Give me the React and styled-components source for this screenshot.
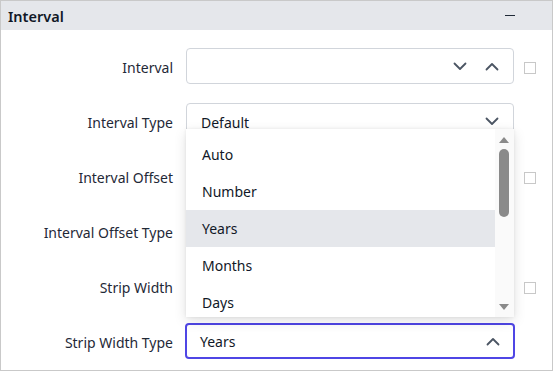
import React from "react";
import styled, { createGlobalStyle } from "styled-components";

const Global = createGlobalStyle`
  html, body { margin: 0; padding: 0; background: #fff; }
  body { font-family: "Segoe UI", "Noto Sans", "Open Sans", sans-serif; }
`;

const Panel = styled.div`
  width: 553px;
  height: 371px;
  box-sizing: border-box;
  border: 1px solid #c9c9c9;
  background: #fff;
  display: flex;
  flex-direction: column;
`;

const Header = styled.div`
  height: 29px;
  background: #e5e7eb;
  display: flex;
  align-items: center;
  justify-content: space-between;
  padding: 0 37px 0 7px;
  font-size: 14.5px;
  font-weight: 600;
  color: #111827;
`;

const Minus = styled.span`
  width: 10px;
  height: 1.5px;
  background: #1f2937;
`;

const Body = styled.div`
  display: flex;
  flex-direction: column;
  gap: 19px;
  padding-top: 18px;
`;

const Row = styled.div`
  display: grid;
  grid-template-columns: 185px 328px 12px;
  height: 36px;
  align-items: center;
  position: relative;
  z-index: ${(p) => (p.$raised ? 2 : 1)};
`;

const Label = styled.div`
  text-align: right;
  padding-right: 13px;
  font-size: 14px;
  color: #1f2937;
  padding-top: 3px;
`;

const Field = styled.div`
  position: relative;
  height: 36px;
  box-sizing: border-box;
  border: ${(p) => (p.$focused ? "2px solid #4f46e5" : "1px solid #d1d5db")};
  border-radius: 4px;
  display: flex;
  align-items: center;
  padding: 0 ${(p) => (p.$focused ? "13px" : "14px")};
  font-size: 14px;
  color: #111827;
  background: #fff;
  margin-left: ${(p) => (p.$focused ? "-1px" : "0")};
  margin-right: ${(p) => (p.$focused ? "-1px" : "0")};
`;

const Value = styled.span`
  flex: 1;
  padding-top: ${(p) => (p.$top ? "2px" : "0")};
`;

const Icons = styled.div`
  display: flex;
  gap: 18px;
  align-items: center;
`;

const Check = styled.div`
  width: 12px;
  height: 12px;
  box-sizing: border-box;
  border: 1px solid #c8c8c8;
  margin-left: 10px;
  margin-top: 4px;
  visibility: ${(p) => (p.$hidden ? "hidden" : "visible")};
`;

const Popup = styled.div`
  position: absolute;
  left: -1px;
  top: 25px;
  width: 328px;
  height: 188px;
  background: #fff;
  box-shadow: 0 4px 12px rgba(0, 0, 0, 0.12), 0 0 3px rgba(0, 0, 0, 0.08);
  display: flex;
  overflow: hidden;
  z-index: 5;
`;

const List = styled.ul`
  list-style: none;
  margin: 0;
  padding: 7px 0 0;
  flex: 1;
`;

const Item = styled.li`
  height: 37px;
  line-height: 37px;
  padding-left: 16px;
  font-size: 14px;
  color: #111827;
  background: ${(p) => (p.$active ? "#e5e7eb" : "transparent")};
`;

const ScrollBar = styled.div`
  width: 19px;
  display: flex;
  flex-direction: column;
  align-items: center;
  padding: 8px 2px 7px 0;
  box-sizing: border-box;
  background: #fafafa;
`;

const Thumb = styled.div`
  width: 10px;
  height: 68px;
  border-radius: 5px;
  background: #8a8a8a;
  margin-top: 6px;
`;

const Spacer = styled.div`
  flex: 1;
`;

const Arrow = styled.div`
  width: 0;
  height: 0;
  border-left: 5px solid transparent;
  border-right: 5px solid transparent;
  ${(p) =>
    p.$down
      ? "border-top: 6px solid #8a8a8a;"
      : "border-bottom: 6px solid #8a8a8a;"}
`;

const Chevron = ({ up }) => (
  <svg width="14" height="9" viewBox="0 0 14 9" fill="none">
    <path
      d={up ? "M1.5 7.5 L7 2 L12.5 7.5" : "M1.5 1.5 L7 7 L12.5 1.5"}
      stroke="#4b5563"
      strokeWidth="1.8"
      strokeLinecap="round"
      strokeLinejoin="round"
    />
  </svg>
);

const items = ["Auto", "Number", "Years", "Months", "Days"];

export default function App() {
  return (
    <>
      <Global />
      <Panel>
        <Header>
          <span>Interval</span>
          <Minus />
        </Header>
        <Body>
          <Row>
            <Label>Interval</Label>
            <Field>
              <Value />
              <Icons>
                <Chevron />
                <Chevron up />
              </Icons>
            </Field>
            <Check />
          </Row>
          <Row $raised>
            <Label>Interval Type</Label>
            <Field>
              <Value $top>Default</Value>
              <Chevron />
              <Popup>
                <List>
                  {items.map((it) => (
                    <Item key={it} $active={it === "Years"}>
                      {it}
                    </Item>
                  ))}
                </List>
                <ScrollBar>
                  <Arrow />
                  <Thumb />
                  <Spacer />
                  <Arrow $down />
                </ScrollBar>
              </Popup>
            </Field>
            <Check $hidden />
          </Row>
          <Row>
            <Label>Interval Offset</Label>
            <Field />
            <Check />
          </Row>
          <Row>
            <Label>Interval Offset Type</Label>
            <Field />
            <Check $hidden />
          </Row>
          <Row>
            <Label>Strip Width</Label>
            <Field />
            <Check />
          </Row>
          <Row>
            <Label>Strip Width Type</Label>
            <Field $focused>
              <Value>Years</Value>
              <Chevron up />
            </Field>
            <Check $hidden />
          </Row>
        </Body>
      </Panel>
    </>
  );
}
